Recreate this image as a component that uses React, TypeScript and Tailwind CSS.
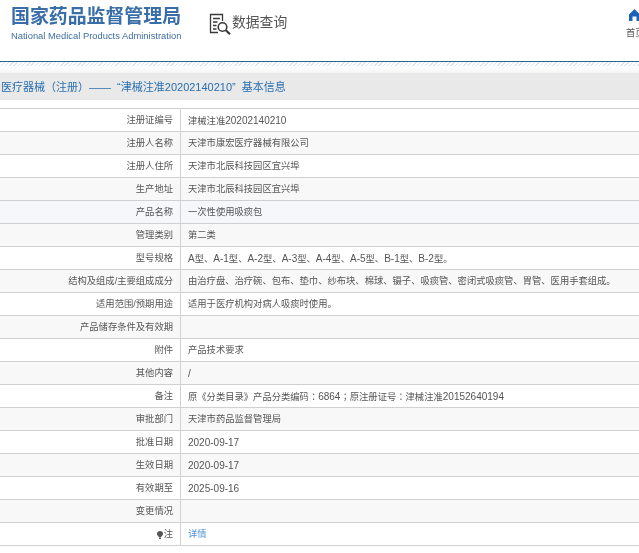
const CJK = "font-['Liberation_Sans','Noto_Sans_CJK_SC',sans-serif]";

type Row = { label: string; value: string; bg: string; link?: boolean; note?: boolean };

const rows: Row[] = [
  { label: "注册证编号", value: "津械注准20202140210", bg: "bg-white" },
  { label: "注册人名称", value: "天津市康宏医疗器械有限公司", bg: "bg-[#f8f8f8]" },
  { label: "注册人住所", value: "天津市北辰科技园区宜兴埠", bg: "bg-white" },
  { label: "生产地址", value: "天津市北辰科技园区宜兴埠", bg: "bg-[#f8f8f8]" },
  { label: "产品名称", value: "一次性使用吸痰包", bg: "bg-[#f5f7fb]" },
  { label: "管理类别", value: "第二类", bg: "bg-[#f8f8f8]" },
  { label: "型号规格", value: "A型、A-1型、A-2型、A-3型、A-4型、A-5型、B-1型、B-2型。", bg: "bg-white" },
  { label: "结构及组成/主要组成成分", value: "由治疗盘、治疗碗、包布、垫巾、纱布块、棉球、镊子、吸痰管、密闭式吸痰管、胃管、医用手套组成。", bg: "bg-[#f8f8f8]" },
  { label: "适用范围/预期用途", value: "适用于医疗机构对病人吸痰时使用。", bg: "bg-white" },
  { label: "产品储存条件及有效期", value: "", bg: "bg-[#f8f8f8]" },
  { label: "附件", value: "产品技术要求", bg: "bg-white" },
  { label: "其他内容", value: "/", bg: "bg-[#f8f8f8]" },
  { label: "备注", value: "原《分类目录》产品分类编码：6864；原注册证号：津械注准20152640194", bg: "bg-white" },
  { label: "审批部门", value: "天津市药品监督管理局", bg: "bg-[#f8f8f8]" },
  { label: "批准日期", value: "2020-09-17", bg: "bg-white" },
  { label: "生效日期", value: "2020-09-17", bg: "bg-[#f8f8f8]" },
  { label: "有效期至", value: "2025-09-16", bg: "bg-white" },
  { label: "变更情况", value: "", bg: "bg-[#f8f8f8]" },
  { label: "注", value: "详情", bg: "bg-white", link: true, note: true },
];

function Value({ text }: { text: string }) {
  const parts = text.split(/([A-Za-z0-9\-\/]+|[：；])/).filter(Boolean);
  return (
    <span className="blur-[0.3px]">
      {parts.map((p, i) =>
        /^[：；]$/.test(p) ? (
          <span key={i} className="font-['Noto_Sans_CJK_JP',sans-serif]">{p}</span>
        ) : /^[A-Za-z0-9\-\/]+$/.test(p) ? (
          <span key={i} className="text-[10px]">{p}</span>
        ) : (
          <span key={i}>{p}</span>
        ),
      )}
    </span>
  );
}

function SearchDocIcon() {
  return (
    <svg width="23" height="23" viewBox="0 0 23 23" fill="none" stroke="#3a3a3a" strokeWidth="1.3" className="-ml-px">
      <path d="M9 19.5H1.5V1.5H13.5V8" />
      <path d="M4 5.5H11M4 9H8.5M4 12.5H7.5M4 16H7.5" />
      <circle cx="13.5" cy="14" r="4.3" strokeWidth="1.6" />
      <path d="M16.8 17.2L21 21.3" strokeWidth="2.2" />
    </svg>
  );
}

export default function App() {
  return (
    <div className={`w-[639px] h-[553px] overflow-hidden bg-white ${CJK}`}>
      <header className="h-[61px] flex">
        <div className="w-[210px] shrink-0 pl-[11px] pt-[6px]">
          <div className="text-[18.9px] leading-[22px] font-bold text-[#3a6ea8] whitespace-nowrap blur-[0.3px]">国家药品监督管理局</div>
          <div className="text-[9.4px] leading-[14px] mt-px text-[#3f6f9f] whitespace-nowrap blur-[0.3px]">National Medical Products Administration</div>
        </div>
        <div className="flex items-start pt-[13px] shrink-0">
          <SearchDocIcon />
          <span className="text-[13.8px] leading-[20px] text-[#555] whitespace-nowrap blur-[0.3px]">数据查询</span>
        </div>
        <div className="ml-auto w-[13px] shrink-0 overflow-hidden pt-[9px]">
          <svg width="11" height="12" viewBox="0 0 11 12" className="ml-[3px]">
            <path d="M0 12V5.5L5.5 0L11 5.5V12H7.5V7.5H3.5V12Z" fill="#1c62b9" />
          </svg>
          <div className="text-[9.3px] leading-[14px] mt-[5px] text-[#555] whitespace-nowrap blur-[0.3px]">首页</div>
        </div>
      </header>
      <div className="h-px bg-[#20698f]" />
      <div className="h-[4px] bg-[repeating-linear-gradient(135deg,#dbe7ec_0,#dbe7ec_1px,#ffffff_1px,#ffffff_3px)]" />
      <div className="h-[7px] bg-gradient-to-b from-white to-[#f5f5f5]" />
      <div className="h-[27px] bg-[#e9e9e9] flex items-center pt-[2px] text-[11px] text-[#2a6fb0] whitespace-nowrap pl-px">
        <span className="blur-[0.3px]">医疗器械（注册）—— &nbsp;“津械注准20202140210”&nbsp; 基本信息</span>
      </div>
      <div className="h-[8px]" />
      <div className="border-t border-[#d0d0d0]">
        {rows.map((r) => (
          <div key={r.label} className={`flex h-[23px] border-b border-[#d0d0d0] text-[9.3px] text-[#555] ${r.bg}`}>
            <div className="w-[181px] shrink-0 border-r border-[#d0d0d0] pr-[7px] pt-[2px] flex items-center justify-end whitespace-nowrap">
              {r.note && (
                <svg width="6" height="8" viewBox="0 0 6 8" className="mr-px">
                  <path d="M3 0A3 3 0 0 1 6 3C6 4.5 4.5 5.2 4 6H2C1.5 5.2 0 4.5 0 3A3 3 0 0 1 3 0ZM2 6.5H4V8H2Z" fill="#555" />
                </svg>
              )}
              <span className="blur-[0.3px]">{r.label}</span>
            </div>
            <div className={`pl-[7px] pt-[2px] flex items-center whitespace-nowrap ${r.link ? "text-[#4a90d9]" : ""}`}>
              <Value text={r.value} />
            </div>
          </div>
        ))}
      </div>
    </div>
  );
}
